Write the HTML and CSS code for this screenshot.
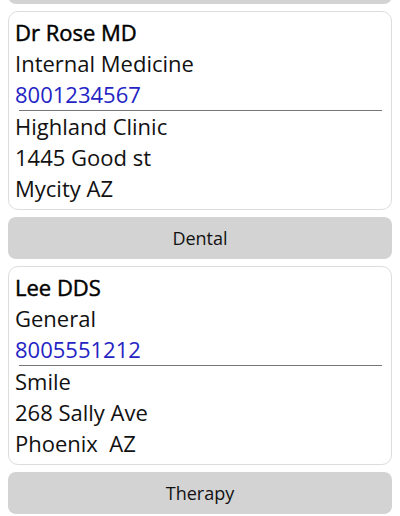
FILE: index.html
```html
<!DOCTYPE html>
<html lang="en">
<head>
  <meta charset="UTF-8">
  <meta name="viewport" content="width=device-width, initial-scale=1.0">
  <title>Providers</title>
  <link rel="stylesheet" href="styles.css">
</head>
<body>
  <div class="list">
    <!-- previous group, scrolled out of view -->
    <div class="group"></div>

    <div class="card">
      <div class="name">Dr Rose MD</div>
      <div>Internal Medicine</div>
      <a class="phone" href="tel:8001234567">8001234567</a>
      <hr>
      <div>Highland Clinic</div>
      <div>1445 Good st</div>
      <div>Mycity AZ</div>
    </div>

    <button class="group">Dental</button>

    <div class="card">
      <div class="name">Lee DDS</div>
      <div>General</div>
      <a class="phone" href="tel:8005551212">8005551212</a>
      <hr>
      <div>Smile</div>
      <div>268 Sally Ave</div>
      <div>Phoenix&nbsp; AZ</div>
    </div>

    <button class="group">Therapy</button>
  </div>
</body>
</html>
```

FILE: styles.css
```css
/* Provider list */
body {
  font-family: "Open Sans", sans-serif;
  margin: 0;
  padding: 0;
  background-color: #fff;
  color: #111;
  overflow: hidden;
}

.list {
  display: flex;
  flex-direction: column;
  gap: 7px;
  padding: 0 8px;
  margin-top: -38px;
}

.group {
  height: 42px;
  border: none;
  border-radius: 8px;
  background-color: #d3d3d3;
  color: #111;
  font-family: "Open Sans", sans-serif;
  font-size: 18px;
  padding: 0;
}

.card {
  border: 1px solid #ddd;
  border-radius: 10px;
  padding: 5px 6px;
  font-size: 22px;
  line-height: 31px;
}

.card .name {
  color: #000;
  -webkit-text-stroke: 0.45px #000;
}

.card .phone {
  display: block;
  color: #2424c4;
  text-decoration: none;
}

.card hr {
  margin: 0 3px 0 4px;
  border: none;
  border-top: 1px solid #777;
}
```
